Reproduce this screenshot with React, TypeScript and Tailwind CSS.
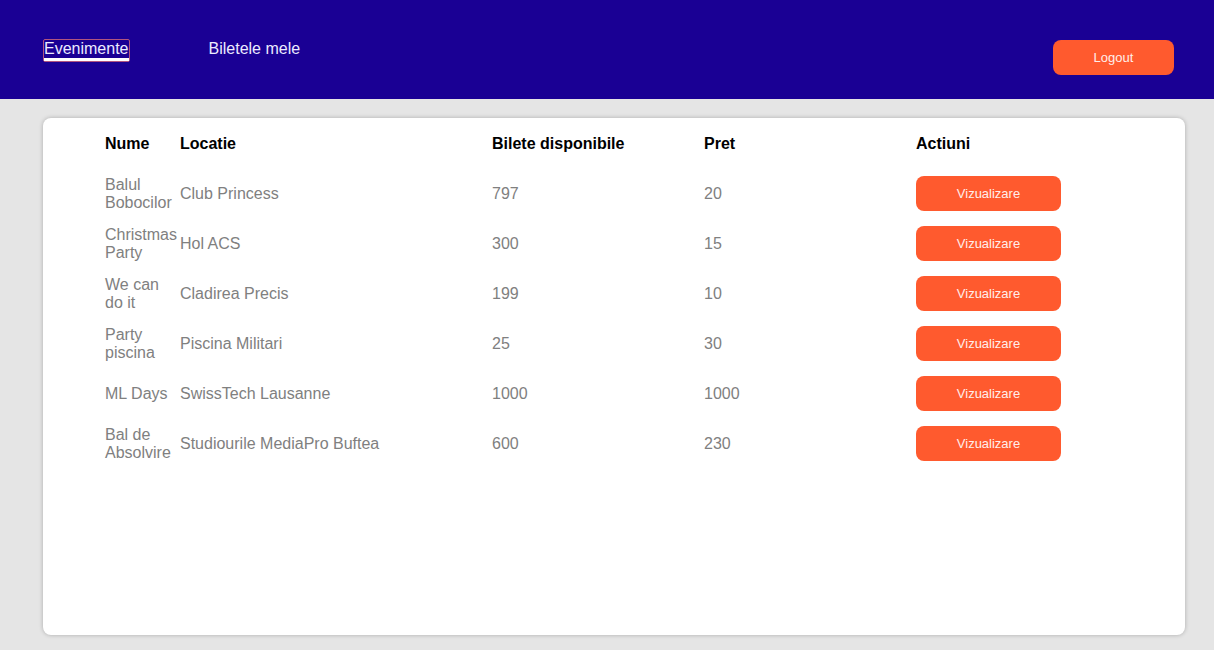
const events = [
  { name: "Balul Bobocilor", location: "Club Princess", tickets: 797, price: 20 },
  { name: "Christmas Party", location: "Hol ACS", tickets: 300, price: 15 },
  { name: "We can do it", location: "Cladirea Precis", tickets: 199, price: 10 },
  { name: "Party piscina", location: "Piscina Militari", tickets: 25, price: 30 },
  { name: "ML Days", location: "SwissTech Lausanne", tickets: 1000, price: 1000 },
  { name: "Bal de Absolvire", location: "Studiourile MediaPro Buftea", tickets: 600, price: 230 },
];

const cols = "grid grid-cols-[75px_312px_212px_212px_212px] items-center h-[50px] pt-px";

export default function App() {
  return (
    <div className="min-h-screen bg-[#e5e5e5] font-['Liberation_Sans',Arial,sans-serif]">
      <header className="h-[99px] bg-[#1a0094] flex items-start justify-between pl-[43px] pr-[40px]">
        <nav className="flex items-start gap-[79px] pt-[39px] text-[16px] text-[#ecebff]">
          <a href="#" className="rounded-[2px] border border-[#b0557f]">
            <span className="block border-b-[3px] border-white leading-[18px]">Evenimente</span>
          </a>
          <a href="#" className="leading-[18px] pt-px">Biletele mele</a>
        </nav>
        <button className="mt-[40px] h-[35px] w-[121px] rounded-lg bg-[#ff5a2e] text-[13px] text-[#ffeeea]">
          Logout
        </button>
      </header>

      <main className="pl-[43px] pr-[29px] py-[19px]">
        <div className="h-[517px] rounded-lg bg-white shadow-[0_0_4px_rgba(0,0,0,0.25)] pl-[62px]">
          <div className={`${cols} text-[16px] font-bold text-black`}>
            <div>Nume</div>
            <div>Locatie</div>
            <div>Bilete disponibile</div>
            <div>Pret</div>
            <div>Actiuni</div>
          </div>
          {events.map((e) => (
            <div key={e.name} className={`${cols} text-[16px] leading-[normal] text-[#808080]`}>
              <div>{e.name}</div>
              <div>{e.location}</div>
              <div>{e.tickets}</div>
              <div>{e.price}</div>
              <div>
                <button className="h-[35px] w-[145px] rounded-lg bg-[#ff5a2e] text-[13px] text-[#ffeeea]">
                  Vizualizare
                </button>
              </div>
            </div>
          ))}
        </div>
      </main>
    </div>
  );
}
